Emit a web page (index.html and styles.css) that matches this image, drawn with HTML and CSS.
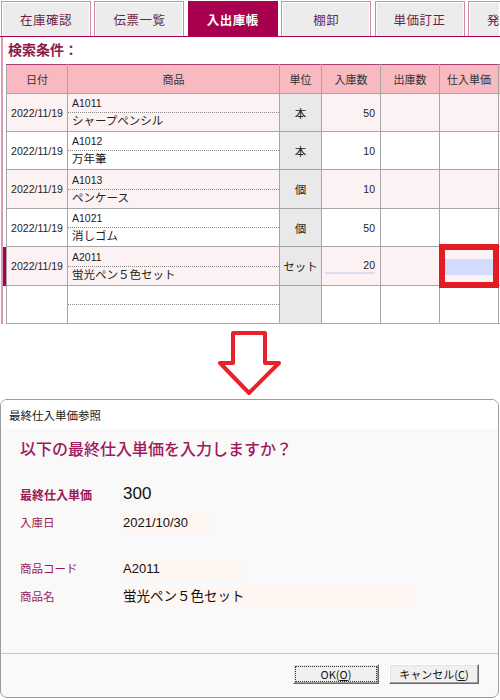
FILE: index.html
```html
<!DOCTYPE html>
<html lang="ja">
<head>
    <meta charset="UTF-8">
    <meta name="viewport" content="width=device-width, initial-scale=1.0">
    <title>入出庫帳 - 最終仕入単価参照</title>
    <link rel="stylesheet" href="styles.css">
</head>
<body>

    <!-- 入出庫帳 画面 -->
    <div class="app">
        <div class="tabs">
            <div class="tab">在庫確認</div>
            <div class="tab">伝票一覧</div>
            <div class="tab active">入出庫帳</div>
            <div class="tab">棚卸</div>
            <div class="tab">単価訂正</div>
            <div class="tab tab-cut">発</div>
        </div>

        <div class="panel">
            <h2 class="search-title">検索条件：</h2>
            <table class="ledger">
                <colgroup>
                    <col class="c-date">
                    <col class="c-item">
                    <col class="c-unit">
                    <col class="c-num">
                    <col class="c-num">
                    <col class="c-num">
                    <col class="c-rest">
                </colgroup>
                <thead>
                    <tr>
                        <th>日付</th>
                        <th>商品</th>
                        <th>単位</th>
                        <th>入庫数</th>
                        <th>出庫数</th>
                        <th>仕入単価</th>
                        <th></th>
                    </tr>
                </thead>
                <tbody>
                    <tr class="odd">
                        <td class="date">2022/11/19</td>
                        <td><div class="code">A1011</div><div class="name">シャープペンシル</div></td>
                        <td class="unit">本</td>
                        <td class="num">50</td>
                        <td></td><td></td><td></td>
                    </tr>
                    <tr>
                        <td class="date">2022/11/19</td>
                        <td><div class="code">A1012</div><div class="name">万年筆</div></td>
                        <td class="unit">本</td>
                        <td class="num">10</td>
                        <td></td><td></td><td></td>
                    </tr>
                    <tr class="odd tall">
                        <td class="date">2022/11/19</td>
                        <td><div class="code">A1013</div><div class="name">ペンケース</div></td>
                        <td class="unit">個</td>
                        <td class="num">10</td>
                        <td></td><td></td><td></td>
                    </tr>
                    <tr>
                        <td class="date">2022/11/19</td>
                        <td><div class="code">A1021</div><div class="name">消しゴム</div></td>
                        <td class="unit">個</td>
                        <td class="num">50</td>
                        <td></td><td></td><td></td>
                    </tr>
                    <tr class="odd selected tall">
                        <td class="date">2022/11/19</td>
                        <td><div class="code">A2011</div><div class="name">蛍光ペン５色セット</div></td>
                        <td class="unit">セット</td>
                        <td class="num"><span class="num-input">20</span></td>
                        <td></td>
                        <td class="price-cell"><div class="price-input"></div><span class="mark"></span></td>
                        <td></td>
                    </tr>
                    <tr>
                        <td class="date"></td>
                        <td><div class="code"></div><div class="name"></div></td>
                        <td class="unit"></td>
                        <td></td><td></td><td></td><td></td>
                    </tr>
                </tbody>
            </table>
        </div>
    </div>

    <!-- 矢印 -->
    <div class="arrow">
        <svg width="66" height="66" viewBox="0 0 66 66">
            <polygon points="16,3 48,3 48,33 62,33 32,63 3,33 16,33" fill="#fff" stroke="#e8212a" stroke-width="4" stroke-linejoin="round"/>
        </svg>
    </div>

    <!-- ダイアログ -->
    <div class="dialog">
        <div class="dialog-title">最終仕入単価参照</div>
        <div class="dialog-body">
            <p class="dialog-heading">以下の最終仕入単価を入力しますか？</p>
            <div class="fields">
                <span class="label strong">最終仕入単価</span>
                <span class="value big">300</span>
                <span class="label">入庫日</span>
                <span class="value w-date">2021/10/30</span>
            </div>
            <div class="fields second">
                <span class="label">商品コード</span>
                <span class="value w-code">A2011</span>
                <span class="label">商品名</span>
                <span class="value w-name">蛍光ペン５色セット</span>
            </div>
        </div>
        <div class="dialog-footer">
            <button class="btn btn-ok">OK(<u>O</u>)</button>
            <button class="btn btn-cancel">キャンセル(<u>C</u>)</button>
        </div>
    </div>

</body>
</html>
```

FILE: styles.css
```css
* {
    margin: 0;
    padding: 0;
    box-sizing: border-box;
}

body {
    width: 500px;
    height: 700px;
    overflow: hidden;
    background: #fff;
    color: #222;
    font-family: "Liberation Sans", "Noto Sans CJK JP", sans-serif;
}

/* タブ */
.app {
    overflow: hidden;
}

.tabs {
    display: flex;
    gap: 3.4px;
    height: 37px;
    padding: 1px 0 0 1px;
    border-bottom: 1px solid #a8004f;
    overflow: hidden;
}

.tab {
    flex: 0 0 90px;
    height: 35px;
    display: flex;
    align-items: center;
    justify-content: center;
    background: #ececec;
    border: 1px solid #d08aa6;
    border-bottom: none;
    box-shadow: inset 1px 1px 0 #fff, inset -1px 0 0 #fff;
    color: #6d1f46;
    font-size: 12.5px;
    letter-spacing: 0.5px;
}

.tab.tab-cut {
    flex: 0 0 32px;
    justify-content: flex-start;
    padding-left: 18px;
    border-right: none;
}

.tab.active {
    background: #a8004f;
    border-color: #a8004f;
    box-shadow: none;
    color: #fff;
    font-weight: bold;
}

/* 一覧 */
.panel {
    margin-left: 1px;
    border-left: 2px solid #dc98b4;
    padding-left: 3px;
}

.search-title {
    height: 27px;
    padding: 0 0 3px 2px;
    display: flex;
    align-items: center;
    font-size: 14px;
    font-weight: bold;
    color: #8c1a4c;
}

.ledger {
    width: 532px;
    table-layout: fixed;
    border-collapse: collapse;
    font-size: 11px;
    color: #222;
}

.c-date { width: 61px; }
.c-item { width: 212px; }
.c-unit { width: 42px; }
.c-num { width: 59px; }
.c-rest { width: 40px; }

.ledger th {
    height: 29px;
    background: #f8b9c1;
    font-weight: normal;
    color: #333;
    border: 1px solid #a6a6a6;
    border-top: 1px solid #b04070;
}

.ledger td {
    height: 38px;
    border: 1px solid #a6a6a6;
    vertical-align: middle;
}

.ledger tr.tall td {
    height: 39px;
}

.ledger tr.odd td {
    background: #fdf2f3;
}

.ledger td.date {
    text-align: center;
    font-size: 10.5px;
}

.ledger td.unit {
    background: #e9e9e9;
    text-align: center;
    font-size: 11.5px;
}

.ledger tr.odd td.unit {
    background: #e9e9e9;
}

.ledger td.num {
    text-align: right;
    padding-right: 5px;
    font-size: 10.5px;
}

.code {
    height: 19px;
    line-height: 18px;
    padding-left: 4px;
    font-size: 10.5px;
    border-bottom: 1px dotted #8a8a8a;
}

.name {
    height: 18px;
    line-height: 17px;
    padding-left: 4px;
    font-size: 11.5px;
}

.ledger tr.selected td.date {
    box-shadow: -4px 0 0 #a8004f;
}

.num-input {
    display: block;
    margin-left: 3px;
    padding-bottom: 1px;
    border-bottom: 2px solid #dcdcf2;
}

.price-cell {
    position: relative;
}

.ledger tr.odd td.price-cell {
    background: #fdf2f3;
}

.price-input {
    height: 16px;
    margin: 2px 5px 0;
    background: #d3dbff;
}

.price-cell .mark {
    position: absolute;
    left: -1px;
    right: -1px;
    top: -3px;
    bottom: -3px;
    border: 6px solid #e31b23;
}

/* 矢印 */
.arrow {
    height: 75px;
    display: flex;
    justify-content: center;
    padding-top: 6px;
}

/* ダイアログ */
.dialog {
    width: 499px;
    height: 299px;
    border: 1px solid #9c9c9c;
    border-radius: 7px;
    background: #f9f9f9;
    overflow: hidden;
    display: flex;
    flex-direction: column;
    font-family: "Noto Sans CJK JP", sans-serif;
}

.dialog-title {
    height: 29px;
    flex: 0 0 29px;
    display: flex;
    align-items: center;
    padding-left: 8px;
    background: #fff;
    font-size: 11.5px;
    color: #222;
}

.dialog-body {
    flex: 1;
    padding: 9px 0 0 19px;
}

.dialog-heading {
    font-size: 16px;
    line-height: 20px;
    color: #a0185a;
    font-weight: 500;
}

.fields {
    display: grid;
    grid-template-columns: 101px 1fr;
    grid-auto-rows: 28px;
    align-items: center;
    margin-top: 22px;
}

.fields.second {
    margin-top: 18px;
}

.label {
    font-size: 11.5px;
    color: #9a1a55;
}

.label.strong {
    font-size: 12px;
    font-weight: bold;
}

.value {
    justify-self: start;
    height: 17px;
    line-height: 17px;
    padding-left: 2px;
    background: #fff6f2;
    font-family: "Liberation Sans", "Noto Sans CJK JP", sans-serif;
    font-size: 13px;
    color: #111;
}

.value.big {
    background: transparent;
    font-size: 17px;
    height: 22px;
    line-height: 22px;
}

.w-date { width: 88px; }
.w-code { width: 120px; }
.w-name { width: 293px; font-size: 13.5px; }

.dialog-footer {
    flex: 0 0 44px;
    display: flex;
    justify-content: flex-end;
    gap: 10px;
    padding: 10px 19px 0 0;
    border-top: 1px solid #c6c6c6;
}

.btn {
    height: 20px;
    background: #f0f0f0;
    border: 1px solid;
    border-color: #fff #696969 #696969 #fff;
    box-shadow: inset -1px -1px 0 #a0a0a0, inset 1px 1px 0 #e3e3e3;
    font-family: "Noto Sans CJK JP", sans-serif;
    font-size: 11px;
    color: #111;
}

.btn-ok {
    width: 86px;
    outline: 1px dotted #333;
    outline-offset: -3px;
}

.btn-cancel {
    width: 90px;
}
```
